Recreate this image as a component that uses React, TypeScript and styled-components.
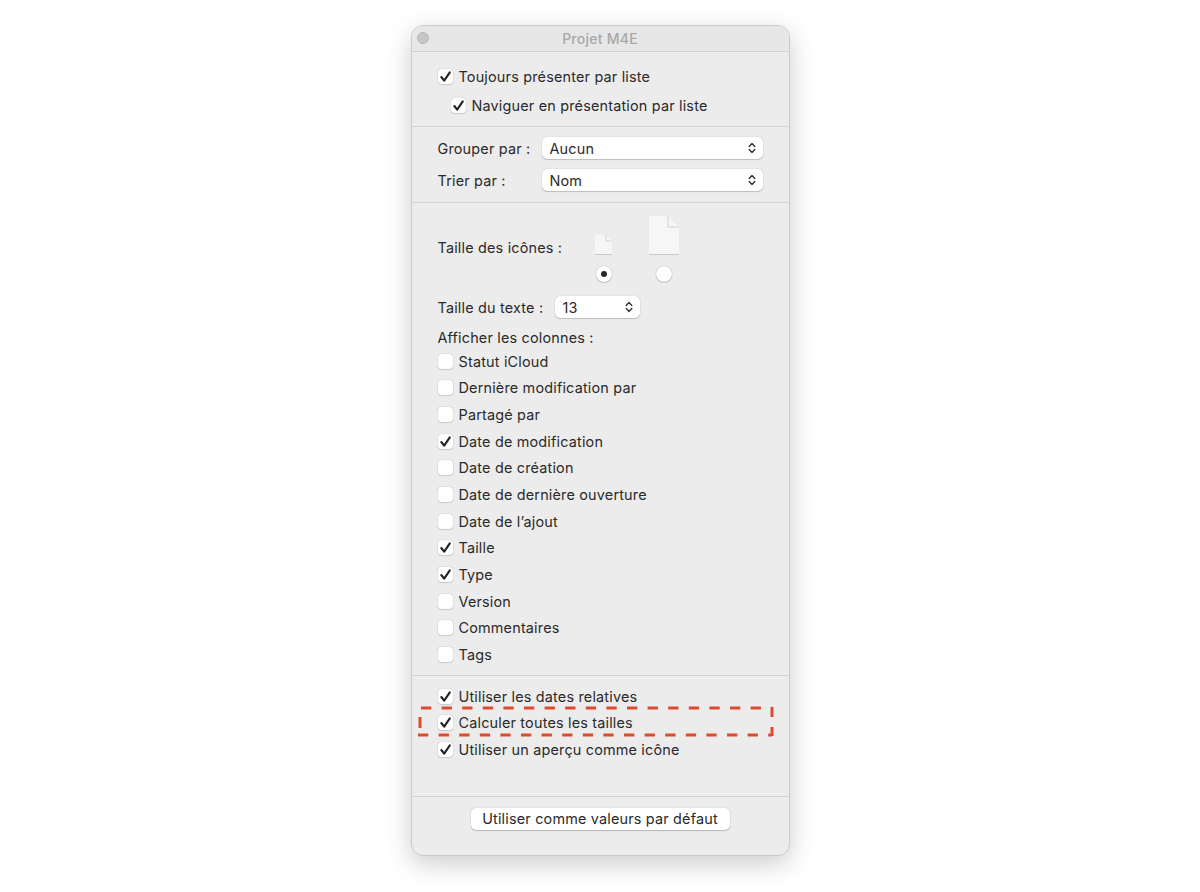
import React from "react";
import styled, { createGlobalStyle } from "styled-components";

const GlobalStyle = createGlobalStyle`
  html, body {
    margin: 0;
    background: #ffffff;
    font-family: "Inter", "Liberation Sans", sans-serif;
  }
`;

const Page = styled.div`
  height: 892px;
  padding-top: 25px;
  box-sizing: border-box;
  display: flex;
  justify-content: center;
  overflow: hidden;
`;

const Window = styled.div`
  position: relative;
  width: 379px;
  height: 831px;
  box-sizing: border-box;
  background: #ececec;
  border: 1px solid #cbcbcb;
  border-radius: 12px;
  box-shadow: 0 8px 26px rgba(0, 0, 0, 0.2);
  display: flex;
  flex-direction: column;
  color: #2a2a2a;
  font-size: 14.4px;
  letter-spacing: 0.19px;
`;

const TitleBar = styled.div`
  position: relative;
  height: 25px;
  flex: none;
  display: flex;
  align-items: center;
  justify-content: center;
  background: #e7e7e7;
  border-radius: 11px 11px 0 0;
  border-bottom: 1px solid #d2d2d2;
  color: #a8a8a8;
  font-weight: 500;
  font-size: 14px;
  letter-spacing: 0.25px;
`;

const CloseDot = styled.span`
  position: absolute;
  left: 5px;
  top: 6px;
  width: 12px;
  height: 12px;
  box-sizing: border-box;
  border-radius: 50%;
  background: #c6c6c6;
  border: 1px solid #b8b8b8;
`;

const Section = styled.div<{ $height: number; $top: number; $gap?: number }>`
  height: ${(p) => p.$height}px;
  flex: none;
  box-sizing: border-box;
  padding: ${(p) => p.$top}px 26px 0;
  border-bottom: 1px solid #d4d4d4;
  display: flex;
  flex-direction: column;
  gap: ${(p) => p.$gap ?? 0}px;
`;

const CheckRow = styled.div<{ $indent?: boolean }>`
  display: flex;
  align-items: center;
  height: 20px;
  flex: none;
  gap: 6px;
  margin-left: ${(p) => (p.$indent ? 13 : 0)}px;
  white-space: nowrap;
`;

const Box = styled.span`
  width: 15px;
  height: 15px;
  flex: none;
  display: flex;
  align-items: center;
  justify-content: center;
  background: #ffffff;
  border-radius: 3.5px;
  box-shadow: 0 0 1px rgba(0, 0, 0, 0.35), 0 1px 1px rgba(0, 0, 0, 0.12);
`;

const FieldRow = styled.div`
  display: flex;
  align-items: center;
  height: 22px;
  flex: none;
  white-space: nowrap;
`;

const FieldLabel = styled.span<{ $width: number }>`
  width: ${(p) => p.$width}px;
  flex: none;
`;

const Select = styled.div<{ $width: number }>`
  width: ${(p) => p.$width}px;
  height: 22px;
  box-sizing: border-box;
  padding: 0 7px 0 8px;
  display: flex;
  align-items: center;
  justify-content: space-between;
  background: #ffffff;
  border-radius: 5px;
  box-shadow: 0 0 1px rgba(0, 0, 0, 0.3), 0 1px 1px rgba(0, 0, 0, 0.18);
`;

const IconGrid = styled.div`
  display: grid;
  grid-template-columns: 158px 16px 44px 16px;
  grid-template-rows: 40px 39px;
  height: 79px;
  flex: none;
`;

const IconLabel = styled.span`
  align-self: end;
  margin-bottom: -1px;
  line-height: 20px;
  white-space: nowrap;
`;

const DocCell = styled.div<{ $col: number }>`
  grid-column: ${(p) => p.$col};
  grid-row: 1;
  display: flex;
  justify-content: center;
  align-items: flex-end;
`;

const RadioCell = styled.div<{ $col: number }>`
  grid-column: ${(p) => p.$col};
  grid-row: 2;
  align-self: end;
  margin-bottom: 14px;
`;

const Radio = styled.span`
  width: 16px;
  height: 16px;
  display: flex;
  align-items: center;
  justify-content: center;
  background: #ffffff;
  border-radius: 50%;
  box-shadow: 0 0 1px rgba(0, 0, 0, 0.4), 0 1px 1px rgba(0, 0, 0, 0.14);
`;

const RadioDot = styled.span`
  width: 6px;
  height: 6px;
  border-radius: 50%;
  background: #262626;
`;

const ColumnsLabel = styled.div`
  height: 20px;
  line-height: 20px;
  margin-top: 10px;
  margin-bottom: 3px;
  flex: none;
`;

const ColumnList = styled.div`
  display: flex;
  flex-direction: column;
  gap: 6.7px;
`;

const Footer = styled.div`
  flex: 1;
  display: flex;
  justify-content: center;
  padding-top: 11px;
`;

const DefaultButton = styled.button`
  width: 259px;
  height: 22px;
  padding: 0 0 2px;
  border: 0;
  background: #ffffff;
  border-radius: 5px;
  box-shadow: 0 0 1px rgba(0, 0, 0, 0.3), 0 1px 1px rgba(0, 0, 0, 0.2);
  color: inherit;
  font: inherit;
  letter-spacing: inherit;
`;

const Highlight = styled.svg`
  position: absolute;
  left: 6px;
  top: 680px;
  overflow: visible;
`;

const Check = () => (
  <svg width="13" height="13" viewBox="0 0 13 13" fill="none">
    <path d="M2.3 7 L5.2 10.6 L10.8 2.4" stroke="#222" strokeWidth="2.1" strokeLinecap="round" strokeLinejoin="round" />
  </svg>
);

const Chevrons = () => (
  <svg width="8" height="12" viewBox="0 0 8 12" fill="none">
    <path d="M1.2 4.4 L4 1.5 L6.8 4.4 M1.2 7.6 L4 10.5 L6.8 7.6" stroke="#333" strokeWidth="1.4" strokeLinecap="round" strokeLinejoin="round" />
  </svg>
);

const Doc = ({ w, h, fold }: { w: number; h: number; fold: number }) => (
  <svg width={w + 4} height={h + 4} viewBox={`-2 -1 ${w + 4} ${h + 4}`} style={{ flex: "none" }}>
    <defs>
      <filter id={`s${w}`} x="-20%" y="-20%" width="140%" height="140%">
        <feDropShadow dx="0" dy="0.7" stdDeviation="0.7" floodColor="#000" floodOpacity="0.22" />
      </filter>
    </defs>
    <path d={`M0 0 H${w - fold} L${w} ${fold} V${h} H0 Z`} fill="#f6f6f6" filter={`url(#s${w})`} />
    <path d={`M${w - fold} 0 V${fold} H${w}`} fill="none" stroke="#cfcfcf" strokeWidth="0.9" />
  </svg>
);

const Item = ({ label, checked = false, indent = false }: { label: string; checked?: boolean; indent?: boolean }) => (
  <CheckRow $indent={indent}>
    <Box>{checked && <Check />}</Box>
    <span>{label}</span>
  </CheckRow>
);

const columns: [string, boolean][] = [
  ["Statut iCloud", false],
  ["Dernière modification par", false],
  ["Partagé par", false],
  ["Date de modification", true],
  ["Date de création", false],
  ["Date de dernière ouverture", false],
  ["Date de l’ajout", false],
  ["Taille", true],
  ["Type", true],
  ["Version", false],
  ["Commentaires", false],
  ["Tags", false],
];

export default function App() {
  return (
    <>
      <GlobalStyle />
      <Page>
        <Window>
          <TitleBar>
            <CloseDot />
            Projet M4E
          </TitleBar>

          <Section $height={75} $top={14} $gap={9}>
            <Item label="Toujours présenter par liste" checked />
            <Item label="Naviguer en présentation par liste" checked indent />
          </Section>

          <Section $height={76} $top={10} $gap={10}>
            <FieldRow>
              <FieldLabel $width={104}>Grouper par :</FieldLabel>
              <Select $width={222}>
                Aucun
                <Chevrons />
              </Select>
            </FieldRow>
            <FieldRow>
              <FieldLabel $width={104}>Trier par :</FieldLabel>
              <Select $width={222}>
                Nom
                <Chevrons />
              </Select>
            </FieldRow>
          </Section>

          <Section $height={473} $top={14}>
            <IconGrid>
              <IconLabel>Taille des icônes :</IconLabel>
              <DocCell $col={2}>
                <Doc w={17} h={19} fold={6} />
              </DocCell>
              <DocCell $col={4}>
                <Doc w={30} h={38} fold={11} />
              </DocCell>
              <RadioCell $col={2}>
                <Radio>
                  <RadioDot />
                </Radio>
              </RadioCell>
              <RadioCell $col={4}>
                <Radio />
              </RadioCell>
            </IconGrid>
            <FieldRow>
              <FieldLabel $width={117}>Taille du texte :</FieldLabel>
              <Select $width={85}>
                13
                <Chevrons />
              </Select>
            </FieldRow>
            <ColumnsLabel>Afficher les colonnes :</ColumnsLabel>
            <ColumnList>
              {columns.map(([label, checked]) => (
                <Item key={label} label={label} checked={checked} />
              ))}
            </ColumnList>
          </Section>

          <Section $height={121} $top={10} $gap={6.6}>
            <Item label="Utiliser les dates relatives" checked />
            <Item label="Calculer toutes les tailles" checked />
            <Item label="Utiliser un aperçu comme icône" checked />
          </Section>

          <Footer>
            <DefaultButton>Utiliser comme valeurs par défaut</DefaultButton>
          </Footer>

          <Highlight width="356" height="30" viewBox="0 0 356 30" fill="none" stroke="#df4a2f" strokeWidth="3">
            <path d="M3 2 H354" strokeDasharray="10.3 10.3" />
            <path d="M0 29 H354" strokeDasharray="10.3 10.3" />
            <path d="M2 11 V22" />
            <path d="M354 1 V11 M354 21 V30" />
          </Highlight>
        </Window>
      </Page>
    </>
  );
}
